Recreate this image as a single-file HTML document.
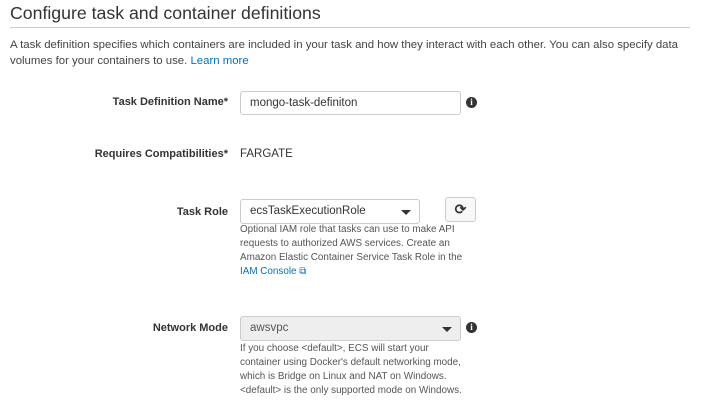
<!DOCTYPE html>
<html><head><meta charset="utf-8"><style>
body{margin:0;width:715px;height:414px;background:#fff;font-family:"Liberation Sans",sans-serif;color:#333;position:relative;overflow:hidden}
.a{position:absolute}
h1{position:absolute;left:10px;top:0;margin:0;font-size:17.7px;font-weight:normal;color:#333;line-height:26px}
.hr{left:10px;top:27px;width:680px;height:1px;background:#ccc}
.p{left:10px;top:37px;width:690px;font-size:11.4px;line-height:16px;color:#444}
a{color:#0073bb;text-decoration:none}
.lbl{right:487px;font-size:11px;font-weight:bold;text-align:right;color:#333}
.inp{border:1px solid #ccc;border-radius:3px;box-sizing:border-box;font-size:11.5px;padding-left:9px;line-height:22px;background:#fff;color:#333}
.caret{position:absolute;right:8px;top:10px;width:0;height:0;border-left:5px solid transparent;border-right:5px solid transparent;border-top:5px solid #333}
.info{width:11px;height:11px;border-radius:50%;background:#333;color:#fff;font-size:9px;font-weight:bold;text-align:center;line-height:11px;font-family:"Liberation Serif",serif}
.help{left:240px;width:224px;font-size:9.9px;line-height:14px;color:#555}
</style></head><body>
<h1>Configure task and container definitions</h1>
<div class="a hr"></div>
<div class="a p">A task definition specifies which containers are included in your task and how they interact with each other. You can also specify data volumes for your containers to use. <a>Learn more</a></div>

<div class="a lbl" style="top:96px">Task Definition Name*</div>
<div class="a inp" style="left:240px;top:91px;width:221px;height:24px">mongo-task-definiton</div>
<div class="a info" style="left:466px;top:97px">i</div>

<div class="a lbl" style="top:148px">Requires Compatibilities*</div>
<div class="a" style="left:240px;top:148px;font-size:11.5px">FARGATE</div>

<div class="a lbl" style="top:206px">Task Role</div>
<div class="a inp" style="left:240px;top:199px;width:180px;height:25px;line-height:23px">ecsTaskExecutionRole<div class="caret"></div></div>
<div class="a inp" style="left:445px;top:197px;width:31px;height:25px;padding:0;text-align:center;background:#f8f8f8;font-size:14px;font-weight:bold;line-height:23px">⟳</div>
<div class="a help" style="top:223px">Optional IAM role that tasks can use to make API requests to authorized AWS services. Create an Amazon Elastic Container Service Task Role in the<br><a>IAM Console ⧉</a></div>

<div class="a lbl" style="top:322px">Network Mode</div>
<div class="a inp" style="left:240px;top:316px;width:221px;height:25px;line-height:23px;background:#eee;color:#555">awsvpc<div class="caret"></div></div>
<div class="a info" style="left:466px;top:322px">i</div>
<div class="a help" style="top:342px">If you choose &lt;default&gt;, ECS will start your<br>container using Docker's default networking mode,<br>which is Bridge on Linux and NAT on Windows.<br>&lt;default&gt; is the only supported mode on Windows.</div>
</body></html>
